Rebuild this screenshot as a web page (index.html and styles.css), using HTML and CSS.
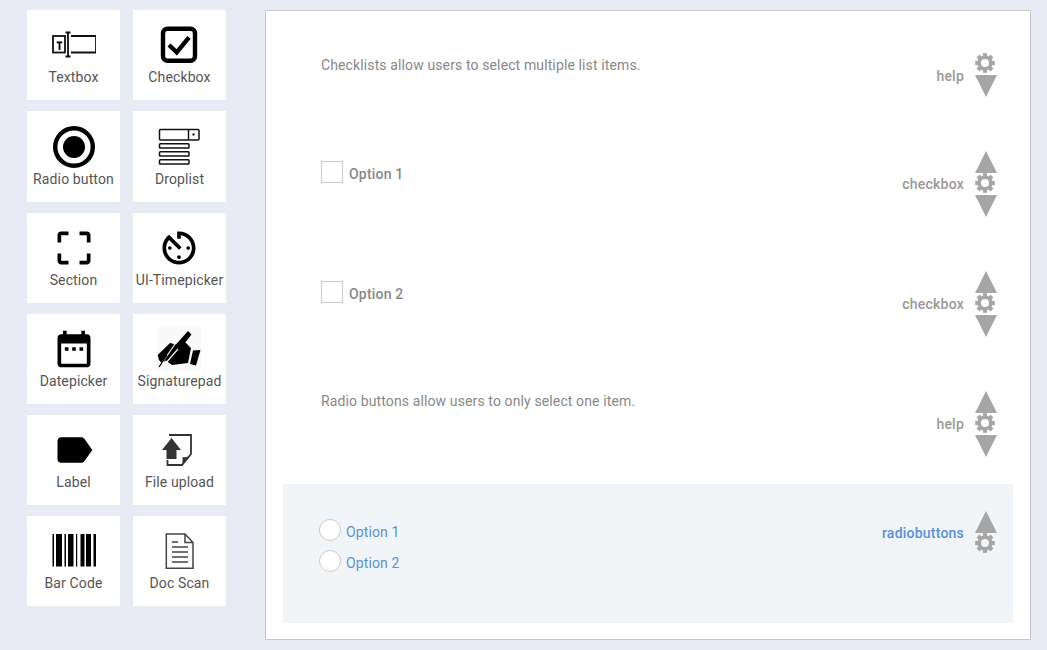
FILE: index.html
```html
<!DOCTYPE html>
<html lang="en">
<head>
<meta charset="utf-8">
<title>Form builder</title>
<link rel="stylesheet" href="styles.css">
</head>
<body>
<svg class="defs" width="0" height="0" aria-hidden="true">
  <defs>
    <symbol id="gear" viewBox="0 0 20 20">
      <circle class="gear-ring" cx="10" cy="10" r="5.8"/>
      <rect x="7.900" y=".2" width="4.200" height="4"/>
      <rect x="7.900" y=".2" width="4.200" height="4" transform="rotate(45 10 10)"/>
      <rect x="7.900" y=".2" width="4.200" height="4" transform="rotate(90 10 10)"/>
      <rect x="7.900" y=".2" width="4.200" height="4" transform="rotate(135 10 10)"/>
      <rect x="7.900" y=".2" width="4.200" height="4" transform="rotate(180 10 10)"/>
      <rect x="7.900" y=".2" width="4.200" height="4" transform="rotate(225 10 10)"/>
      <rect x="7.900" y=".2" width="4.200" height="4" transform="rotate(270 10 10)"/>
      <rect x="7.900" y=".2" width="4.200" height="4" transform="rotate(315 10 10)"/>
    </symbol>
    <symbol id="up" viewBox="0 0 22 22"><polygon points="11,0 22,22 0,22"/></symbol>
    <symbol id="down" viewBox="0 0 22 22"><polygon points="0,0 22,0 11,22"/></symbol>
  </defs>
</svg>
<div class="page">
  <aside class="palette">
    <div class="tool">
      <svg class="tool-icon" viewBox="0 0 44 44"><g class="line line-heavy"><rect x="1" y="13" width="12" height="16.500"/><path d="M16 9.500V33.500M13.500 9.500h5M13.500 33.500h5M19 13H44V29.500H19"/></g><path class="solid" d="M4.700 18.500h5.600v1.800H8.400V27H6.600V20.300H4.700z"/></svg>
      <span class="tool-name">Textbox</span>
    </div>
    <div class="tool">
      <svg class="tool-icon" viewBox="0 0 44 44"><rect class="thick" x="6" y="5.700" width="32" height="32" rx="4.500"/><path class="tick" d="M12 22l7.700 7.300L32 14.300"/></svg>
      <span class="tool-name">Checkbox</span>
    </div>
    <div class="tool">
      <svg class="tool-icon" viewBox="0 0 44 44"><circle class="thick" cx="22" cy="22" r="18.800"/><circle class="solid" cx="22" cy="22" r="11"/></svg>
      <span class="tool-name">Radio button</span>
    </div>
    <div class="tool">
      <svg class="tool-icon" viewBox="0 0 44 44"><g class="line"><rect x="2.500" y="4.500" width="39.500" height="10.500" rx="1"/><path d="M31.500 4.500V15"/><rect x="2.500" y="18.800" width="29.500" height="4.200" rx=".8"/><rect x="2.500" y="26.800" width="29.500" height="4.200" rx=".8"/><rect x="2.500" y="34.800" width="29.500" height="4.200" rx=".8"/></g><rect class="solid" x="35.500" y="8.500" width="2" height="2"/></svg>
      <span class="tool-name">Droplist</span>
    </div>
    <div class="tool">
      <svg class="tool-icon" viewBox="0 0 24 24"><path class="solid" d="M3 5v4h2V5h4V3H5c-1.100 0-2 .9-2 2zm2 10H3v4c0 1.100.9 2 2 2h4v-2H5v-4zm14 4h-4v2h4c1.100 0 2-.9 2-2v-4h-2v4zm0-16h-4v2h4v4h2V5c0-1.100-.9-2-2-2z"/></svg>
      <span class="tool-name">Section</span>
    </div>
    <div class="tool">
      <svg class="tool-icon" viewBox="0 0 24 24"><path class="solid" d="M11 17c0 .55.45 1 1 1s1-.45 1-1-.45-1-1-1-1 .45-1 1zm0-14v4h2V5.080c3.390.49 6 3.390 6 6.920 0 3.870-3.130 7-7 7s-7-3.130-7-7c0-1.680.59-3.220 1.580-4.420L12 13l1.410-1.410-6.800-6.800v.02C4.420 6.450 3 9.050 3 12c0 4.970 4.020 9 9 9 4.970 0 9-4.030 9-9s-4.030-9-9-9h-1zm7 9c0-.55-.45-1-1-1s-1 .45-1 1 .45 1 1 1 1-.45 1-1zM6 12c0 .55.45 1 1 1s1-.45 1-1-.45-1-1-1-1 .45-1 1z"/></svg>
      <span class="tool-name">UI-Timepicker</span>
    </div>
    <div class="tool">
      <svg class="tool-icon" viewBox="0 0 24 24"><path class="solid" d="M9 11H7v2h2v-2zm4 0h-2v2h2v-2zm4 0h-2v2h2v-2zm2-7h-1V2h-2v2H8V2H6v2H5c-1.110 0-1.990.9-1.990 2L3 20c0 1.100.89 2 2 2h14c1.100 0 2-.9 2-2V6c0-1.100-.9-2-2-2zm0 16H5V9h14v11z"/></svg>
      <span class="tool-name">Datepicker</span>
    </div>
    <div class="tool">
      <svg class="tool-icon" viewBox="0 0 44 44"><rect class="hatch" width="44" height="44"/><path class="solid" d="M.7 28L13 16l6 1.500 9.500-2L34 21l-3 15-16 2-6-4.500-4.500 2.500-2.500-3z"/><path class="solid" d="M31 4l3.500 3.500L21 25l-7-2z"/><path class="solid" d="M36 23.500l7.500-.5-4.500 15.500-6-1.500z"/><path class="gap" d="M3 39L18 17"/><path class="gap" d="M8 37L21 22"/><path class="nib" d="M2 40L10 28"/></svg>
      <span class="tool-name">Signaturepad</span>
    </div>
    <div class="tool">
      <svg class="tool-icon" viewBox="0 0 24 24"><path class="solid" d="M17.630 5.840C17.270 5.330 16.670 5 16 5L5 5.010C3.900 5.010 3 5.900 3 7v10c0 1.100.9 1.990 2 1.990L16 19c.67 0 1.270-.33 1.630-.84L22 12l-4.370-6.160z"/></svg>
      <span class="tool-name">Label</span>
    </div>
    <div class="tool">
      <svg class="tool-icon" viewBox="0 0 44 44"><path class="dark-line" d="M12 7H34V26L25 37H10.500V32"/><path class="dark-fill" d="M14.500 10L24 22H19.500V31H9.500V22H5z"/><path class="dark-fill" d="M34 27L25.500 37V29q5 1 8.500-2z"/></svg>
      <span class="tool-name">File upload</span>
    </div>
    <div class="tool">
      <svg class="tool-icon" viewBox="0 0 44 44"><path class="solid" d="M.5 5h1.500v32.500H.5zM4 5h6v32.500H4zM12.500 5H14v32.500h-1.500zM16 5h5.500v32.500H16zM24 5h1.200v32.500H24zM28.500 5h4v32.500h-4zM34 5h5v32.500h-5zM41.500 5H44v32.500h-2.500z"/></svg>
      <span class="tool-name">Bar Code</span>
    </div>
    <div class="tool">
      <svg class="tool-icon" viewBox="0 0 44 44"><path class="doc-line" d="M9.300 5H28L36 13.500V39.300H9.300zM28 5V13.500H36"/><path class="doc-line" d="M15 13h6M15 18h16M15 23h16M15 28h16M15 33h16"/></svg>
      <span class="tool-name">Doc Scan</span>
    </div>
  </aside>

  <main class="canvas">
    <section class="field field-first">
      <div class="field-body"><p class="help-text help-first">Checklists allow users to select multiple list items.</p></div>
      <span class="field-type">help</span>
      <div class="controls">
        <svg class="ctl-gear"><use href="#gear"/></svg>
        <svg class="ctl-arrow"><use href="#down"/></svg>
      </div>
    </section>
    <section class="field">
      <div class="field-body"><label class="check"><span class="box"></span>Option 1</label></div>
      <span class="field-type">checkbox</span>
      <div class="controls">
        <svg class="ctl-arrow"><use href="#up"/></svg>
        <svg class="ctl-gear"><use href="#gear"/></svg>
        <svg class="ctl-arrow"><use href="#down"/></svg>
      </div>
    </section>
    <section class="field">
      <div class="field-body"><label class="check"><span class="box"></span>Option 2</label></div>
      <span class="field-type">checkbox</span>
      <div class="controls">
        <svg class="ctl-arrow"><use href="#up"/></svg>
        <svg class="ctl-gear"><use href="#gear"/></svg>
        <svg class="ctl-arrow"><use href="#down"/></svg>
      </div>
    </section>
    <section class="field">
      <div class="field-body"><p class="help-text">Radio buttons allow users to only select one item.</p></div>
      <span class="field-type">help</span>
      <div class="controls">
        <svg class="ctl-arrow"><use href="#up"/></svg>
        <svg class="ctl-gear"><use href="#gear"/></svg>
        <svg class="ctl-arrow"><use href="#down"/></svg>
      </div>
    </section>
    <section class="field field-active">
      <div class="field-body radios">
        <label class="radio"><span class="dot"></span>Option 1</label>
        <label class="radio"><span class="dot"></span>Option 2</label>
      </div>
      <span class="field-type">radiobuttons</span>
      <div class="controls">
        <svg class="ctl-arrow"><use href="#up"/></svg>
        <svg class="ctl-gear"><use href="#gear"/></svg>
      </div>
    </section>
  </main>
</div>
</body>
</html>
```
FILE: styles.css
```css
* { box-sizing: border-box; }
html, body { margin: 0; height: 100%; }
body {
  background: #e8ebf3;
  font-family: Roboto, "Liberation Sans", sans-serif;
  font-size: 14px;
  letter-spacing: .12px;
  overflow: hidden;
}
.defs { display: block; height: 0; }
.page { display: flex; align-items: flex-start; }

/* palette */
.palette {
  width: 265px;
  flex: none;
  padding: 10.1px 0 0 27px;
  display: grid;
  grid-template-columns: 93px 93px;
  grid-auto-rows: 90.22px;
  column-gap: 13px;
  row-gap: 11px;
}
.tool {
  background: #fff;
  display: flex;
  flex-direction: column;
  align-items: center;
  padding-top: 13.2px;
}
.tool:nth-child(even) .tool-icon { margin-right: 1px; }
.tool-icon { width: 44px; height: 44px; display: block; flex: none; }
.tool-name {
  line-height: 20px;
  color: #555;
  white-space: nowrap;
}
.solid { fill: #000; }
.line { fill: none; stroke: #111; stroke-width: 1.5; }
.line-heavy { stroke-width: 1.8; }
.thick { fill: none; stroke: #000; stroke-width: 4.4; }
.tick { fill: none; stroke: #000; stroke-width: 4.4; }
.hatch { fill: #f9f9f9; }
.gap { fill: none; stroke: #f4f4f4; stroke-width: 1.2; }
.nib { fill: none; stroke: #000; stroke-width: 1.2; }
.dark-line { fill: none; stroke: #333; stroke-width: 1.8; }
.dark-fill { fill: #333; }
.doc-line { fill: none; stroke: #444; stroke-width: 1.5; }

/* canvas */
.canvas {
  width: 766px;
  height: 630px;
  flex: none;
  margin-top: 10px;
  background: #fff;
  border: 1px solid #c8c8c8;
  padding: 0 17px;
}
.field {
  height: 120px;
  padding: 27px 16px 0 38px;
  display: flex;
  align-items: flex-start;
}
.field-first { height: 113px; padding-top: 42px; }
.field-active {
  height: 139px;
  background: #f1f5f8;
  border-radius: 2px;
}
.field-body { flex: 1; min-width: 0; }
.help-text { margin: 0; line-height: 20px; color: #888; }
.help-first { margin-top: 2px; }

.check {
  display: flex;
  align-items: flex-start;
  gap: 6px;
  margin-top: 10px;
  font-weight: 500;
  letter-spacing: .2px;
  color: #888;
  line-height: 26px;
}
.box {
  width: 22px;
  height: 22px;
  background: #fff;
  border: 1px solid #ccc;
}
.radios { margin: 8px 0 0 -2px; display: flex; flex-direction: column; }
.radio {
  display: flex;
  align-items: flex-start;
  gap: 5px;
  height: 31px;
  line-height: 26px;
  color: #5a90d8;
}
.dot {
  width: 22px;
  height: 22px;
  border-radius: 50%;
  background: #fff;
  border: 1px solid #ccc;
}

.field-type {
  margin-top: 23px;
  margin-right: 11px;
  font-weight: 500;
  letter-spacing: .22px;
  line-height: 20px;
  color: #999;
  white-space: nowrap;
}
.field-first .field-type { margin-top: 13px; }
.field-active .field-type { margin-top: 12px; color: #5a90d8; }
.controls { width: 22px; flex: none; display: flex; flex-direction: column; align-items: center; }
.ctl-arrow { width: 22px; height: 22px; fill: #a6a6a6; display: block; }
.ctl-gear { width: 20px; height: 20px; margin: 0 2px 2px 0; fill: #a6a6a6; display: block; }
.gear-ring { fill: none; stroke: #a6a6a6; stroke-width: 3.6; }
```
